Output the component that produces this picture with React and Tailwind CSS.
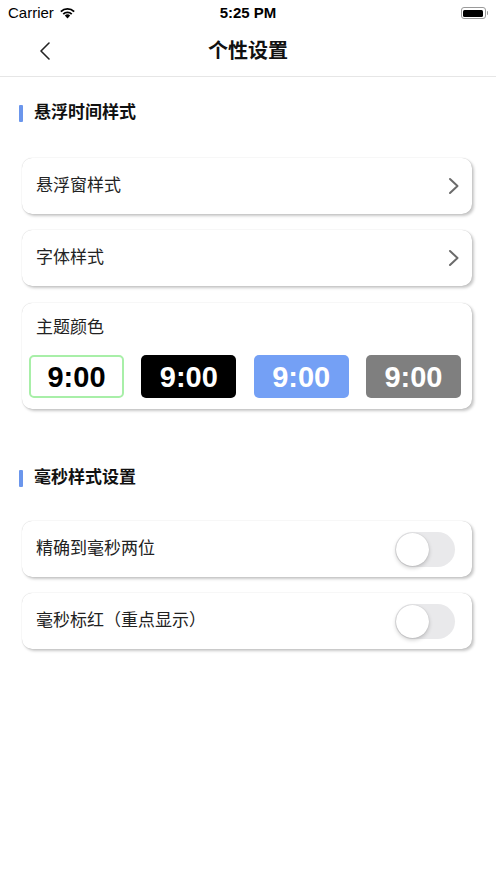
import React from 'react'

const ChevronRight = () => (
  <svg width="12" height="18" viewBox="0 0 12 18" fill="none">
    <path d="M2 2 L9.5 9 L2 16" stroke="#6b6b6b" strokeWidth="2" strokeLinecap="round" strokeLinejoin="round" />
  </svg>
)

const Toggle = () => (
  <div className="relative w-[60px] h-[35px] rounded-full bg-[#e9e9eb]">
    <div className="absolute left-[1px] top-[1px] w-[33px] h-[33px] rounded-full bg-white shadow-[0_2px_4px_rgba(0,0,0,0.2),0_0_1px_rgba(0,0,0,0.2)]" />
  </div>
)

const Card = ({ children, className = '' }) => (
  <div className={`ml-[22px] mr-[24px] rounded-[10px] bg-white shadow-[0_0_1px_rgba(0,0,0,0.25),2px_2px_3px_rgba(0,0,0,0.22)] ${className}`}>
    {children}
  </div>
)

const SectionHeader = ({ title, className = '' }) => (
  <div className={`flex items-center h-[20px] ${className}`}>
    <div className="ml-[19px] w-[4px] h-[17px] rounded-[1px] bg-[#6b96ec]" />
    <span className="ml-[11px] text-[17px] font-bold text-[#111]">{title}</span>
  </div>
)

const swatches = [
  { box: 'bg-white border-2 border-[#a8efa8]', text: 'text-black' },
  { box: 'bg-black', text: 'text-white' },
  { box: 'bg-[#74a0f5]', text: 'text-white' },
  { box: 'bg-[#7f7f7f]', text: 'text-white' }
]

export default function App() {
  return (
    <div className="w-[496px] h-[882px] bg-white font-['Liberation_Sans','Noto_Sans_CJK_SC',sans-serif] text-[#111] overflow-hidden">
      {/* Status bar */}
      <div className="relative flex items-center justify-between h-[26px] px-[8px]">
        <div className="flex items-center gap-[5px]">
          <span className="text-[15px] text-black">Carrier</span>
          <svg width="17" height="12" viewBox="0 0 17 12">
            <path d="M8.5 11.5 L5.8 8.6 A4 4 0 0 1 11.2 8.6 Z" fill="#000" />
            <path d="M3.6 6.4 A7 7 0 0 1 13.4 6.4 L12.1 7.8 A5.2 5.2 0 0 0 4.9 7.8 Z" fill="#000" />
            <path d="M1.2 3.9 A10.5 10.5 0 0 1 15.8 3.9 L14.5 5.3 A8.6 8.6 0 0 0 2.5 5.3 Z" fill="#000" />
          </svg>
        </div>
        <span className="absolute left-1/2 -translate-x-1/2 text-[15px] font-bold text-black">5:25 PM</span>
        <div className="flex items-center">
          <div className="w-[25px] h-[12px] rounded-[3px] border border-[#9a9a9a] p-[1.5px]">
            <div className="w-full h-full rounded-[1.5px] bg-black" />
          </div>
          <div className="w-[1.5px] h-[4px] ml-[1px] rounded-r bg-[#9a9a9a]" />
        </div>
      </div>

      {/* Nav bar */}
      <div className="relative flex items-center justify-center h-[51px] border-b border-[#e6e6e6]">
        <svg className="absolute left-[39px] top-[15px]" width="12" height="20" viewBox="0 0 12 20" fill="none">
          <path d="M10 2 L2 10 L10 18" stroke="#222" strokeWidth="1.6" strokeLinecap="round" strokeLinejoin="round" />
        </svg>
        <span className="text-[20px] font-bold text-[#111]">个性设置</span>
      </div>

      <SectionHeader title="悬浮时间样式" className="mt-[26px]" />

      <Card className="mt-[35px] h-[56px] flex items-center justify-between pl-[14px] pr-[12px]">
        <span className="text-[17px] text-[#222]">悬浮窗样式</span>
        <ChevronRight />
      </Card>

      <Card className="mt-[16px] h-[56px] flex items-center justify-between pl-[14px] pr-[12px]">
        <span className="text-[17px] text-[#222]">字体样式</span>
        <ChevronRight />
      </Card>

      <Card className="mt-[17px] h-[106px] pt-[13px]">
        <div className="pl-[14px] text-[17px] text-[#222] leading-[24px]">主题颜色</div>
        <div className="mt-[15px] flex justify-between pl-[7px] pr-[11px]">
          {swatches.map((s, i) => (
            <div key={i} className={`w-[95px] h-[43px] rounded-[5px] flex items-center justify-center ${s.box}`}>
              <span className={`text-[29px] font-bold leading-none mt-[2px] ${s.text}`}>9:00</span>
            </div>
          ))}
        </div>
      </Card>

      <SectionHeader title="毫秒样式设置" className="mt-[59px]" />

      <Card className="mt-[33px] h-[56px] flex items-center justify-between pl-[14px] pr-[17px]">
        <span className="text-[17px] text-[#222]">精确到毫秒两位</span>
        <Toggle />
      </Card>

      <Card className="mt-[16px] h-[56px] flex items-center justify-between pl-[14px] pr-[17px]">
        <span className="text-[17px] text-[#222]">毫秒标红（重点显示）</span>
        <Toggle />
      </Card>
    </div>
  )
}
